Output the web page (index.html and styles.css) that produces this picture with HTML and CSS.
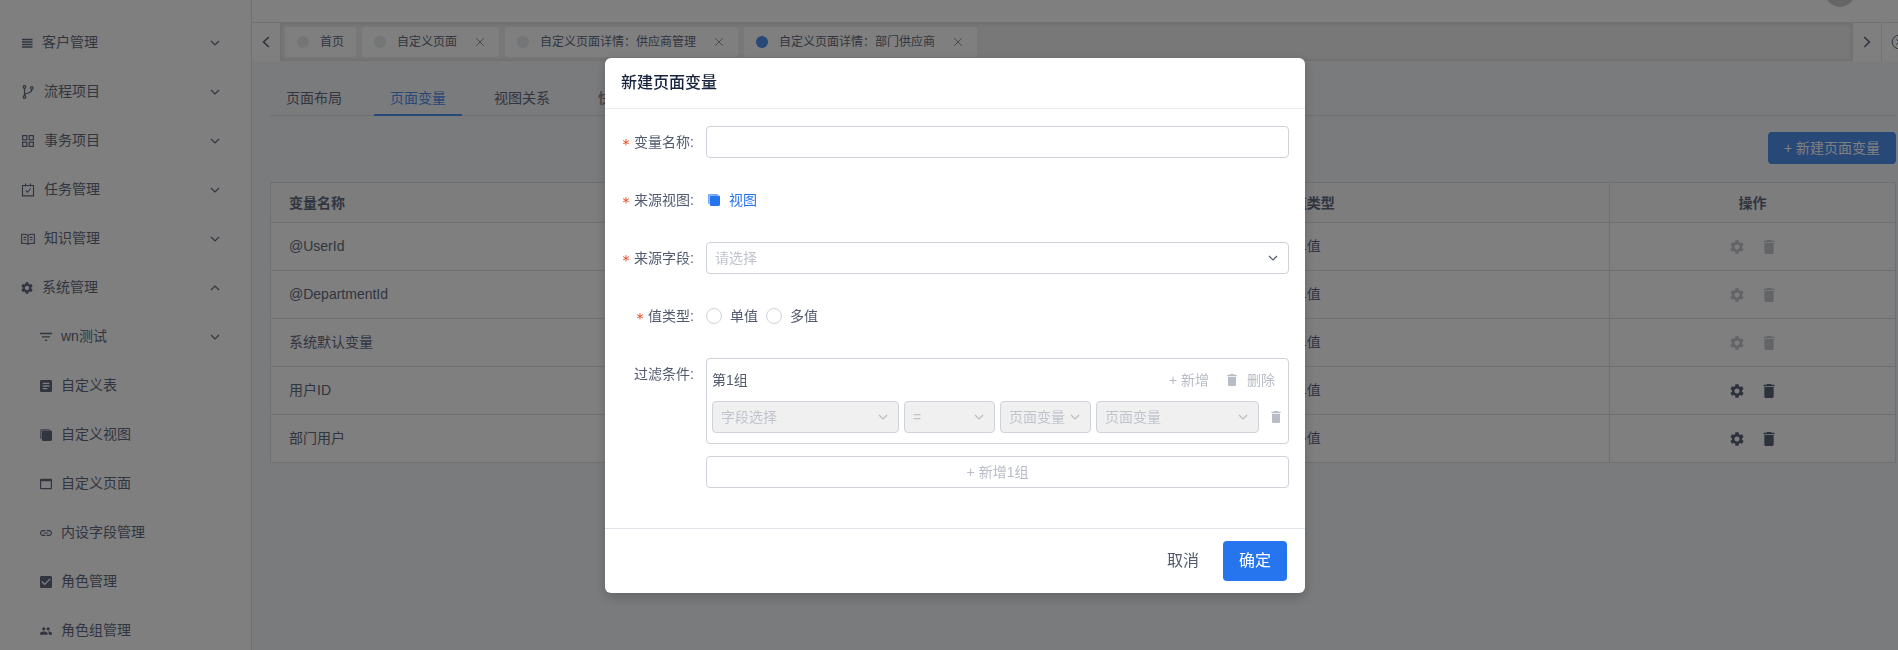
FILE: index.html
```html
<!DOCTYPE html>
<html lang="zh-CN">
<head>
<meta charset="utf-8">
<title>新建页面变量</title>
<link rel="stylesheet" href="styles.css">
</head>
<body>
<svg class="sprite" aria-hidden="true">
  <symbol id="i-menu" viewBox="0 0 12 12"><path d="M1 2.500h10.500M1 5h10.500M1 7.500h10.500M1 10h10.500" stroke="currentColor" stroke-width="1.300" fill="none"/></symbol>
  <symbol id="i-branch" viewBox="0 0 14 14"><g fill="none" stroke="currentColor" stroke-width="1.200"><circle cx="3.500" cy="2" r="1.300"/><circle cx="3.500" cy="12" r="1.300"/><circle cx="10.800" cy="3" r="1.300"/><path d="M3.500 3.300v7.400M10.800 4.300c0 3.400-1.800 3.200-4 3.700-2 .4-3.300 1-3.300 2.700"/></g></symbol>
  <symbol id="i-grid" viewBox="0 0 14 14"><g fill="none" stroke="currentColor" stroke-width="1.200"><rect x="1.600" y="1.600" width="4.200" height="4.200"/><rect x="8.200" y="1.600" width="4.200" height="4.200"/><rect x="1.600" y="8.200" width="4.200" height="4.200"/><rect x="8.200" y="8.200" width="4.200" height="4.200"/></g></symbol>
  <symbol id="i-task" viewBox="0 0 14 14"><path d="M1.500 2.500h11v10.400h-11zM4.500.6v3M9.500.6v3M4.600 7.300l1.900 2 3.200-3.800" fill="none" stroke="currentColor" stroke-width="1.100"/></symbol>
  <symbol id="i-book" viewBox="0 0 14 14"><path d="M7 3.200C5.500 2.200 3 2.200.6 2.400v9c2.400-.2 4.900-.2 6.400.9 1.500-1.100 4-1.100 6.400-.9v-9C11 2.200 8.500 2.200 7 3.200zv9M2.500 5.400h2.700M2.500 7.700h2.700M8.800 5.400h2.700M8.800 7.700h2.700" fill="none" stroke="currentColor" stroke-width="1.100"/></symbol>
  <symbol id="i-gear" viewBox="2 2 20 20"><path fill="currentColor" d="M19.140 12.940c.04-.3.06-.61.06-.94 0-.32-.02-.64-.07-.94l2.030-1.580c.18-.14.23-.41.12-.61l-1.920-3.320c-.12-.22-.37-.29-.59-.22l-2.390.96c-.5-.38-1.030-.7-1.620-.94l-.36-2.540c-.04-.24-.24-.41-.48-.41h-3.840c-.24 0-.43.17-.47.41l-.36 2.540c-.59.24-1.130.57-1.620.94l-2.390-.96c-.22-.08-.47 0-.59.22L2.740 8.870c-.12.21-.08.47.12.61l2.030 1.580c-.05.3-.09.63-.09.94s.02.64.07.94l-2.030 1.580c-.18.14-.23.41-.12.61l1.920 3.320c.12.22.37.29.59.22l2.390-.96c.5.38 1.030.7 1.620.94l.36 2.540c.05.24.24.41.48.41h3.840c.24 0 .44-.17.47-.41l.36-2.540c.59-.24 1.130-.56 1.620-.94l2.390.96c.22.08.47 0 .59-.22l1.920-3.320c.12-.22.07-.47-.12-.61l-2.010-1.580zM12 15.600c-1.980 0-3.600-1.620-3.600-3.600s1.620-3.600 3.600-3.600 3.600 1.620 3.600 3.600-1.620 3.600-3.600 3.600z"/></symbol>
  <symbol id="i-filter" viewBox="0 0 12 12"><path d="M0 2.500h12M2 5.900h8M4.800 9.300h2.400" stroke="currentColor" stroke-width="1.300" fill="none"/></symbol>
  <symbol id="i-doc" viewBox="3 3 18 18"><path fill="currentColor" d="M19 3H5c-1.100 0-2 .9-2 2v14c0 1.100.9 2 2 2h14c1.100 0 2-.9 2-2V5c0-1.100-.9-2-2-2zm-5 14H7v-2h7v2zm3-4H7v-2h10v2zm0-4H7V7h10v2z"/></symbol>
  <symbol id="i-view" viewBox="0 0 12 12"><path fill="currentColor" opacity=".65" d="M1.400 0h7.400c.7 0 1.200.5 1.200 1.300H2.800c-.9 0-1.300.5-1.300 1.300V10C.5 10 0 9.400 0 8.700V1.400C0 .6.6 0 1.400 0z"/><rect fill="currentColor" x="1.800" y="1.600" width="10.200" height="10.400" rx="1.400"/></symbol>
  <symbol id="i-page" viewBox="0 0 12 12"><path fill="currentColor" fill-rule="evenodd" d="M1.300.8h9.400c.8 0 1.300.5 1.300 1.200v8c0 .8-.5 1.300-1.300 1.300H1.300C.5 11.300 0 10.800 0 10V2C0 1.300.5.8 1.300.8zM1.200 3.300V10h9.600V3.300z"/></symbol>
  <symbol id="i-link" viewBox="2 2 20 20"><path fill="currentColor" d="M3.900 12c0-1.710 1.390-3.100 3.100-3.100h4V7H7c-2.760 0-5 2.240-5 5s2.240 5 5 5h4v-1.900H7c-1.710 0-3.100-1.390-3.100-3.100zM8 13h8v-2H8v2zm9-6h-4v1.900h4c1.710 0 3.100 1.390 3.100 3.100s-1.390 3.100-3.100 3.100h-4V17h4c2.760 0 5-2.240 5-5s-2.240-5-5-5z"/></symbol>
  <symbol id="i-check" viewBox="3 3 18 18"><path fill="currentColor" d="M19 3H5c-1.110 0-2 .9-2 2v14c0 1.100.89 2 2 2h14c1.110 0 2-.9 2-2V5c0-1.100-.89-2-2-2zm-9 14l-5-5 1.410-1.410L10 14.170l7.590-7.590L19 8l-9 9z"/></symbol>
  <symbol id="i-group" viewBox="1 1 22 22"><path fill="currentColor" d="M16 11c1.660 0 2.990-1.340 2.990-3S17.660 5 16 5s-3 1.340-3 3 1.340 3 3 3zm-8 0c1.660 0 2.990-1.340 2.990-3S9.660 5 8 5 5 6.340 5 8s1.340 3 3 3zm0 2c-2.330 0-7 1.170-7 3.500V19h14v-2.500c0-2.330-4.670-3.500-7-3.500zm8 0c-.29 0-.62.02-.97.05 1.160.84 1.970 1.970 1.970 3.450V19h6v-2.500c0-2.330-4.670-3.500-7-3.500z"/></symbol>
  <symbol id="i-trash" viewBox="3 3 18 18"><path fill="currentColor" d="M6 19c0 1.100.9 2 2 2h8c1.100 0 2-.9 2-2V7H6v12zM19 4h-3.500l-1-1h-5l-1 1H5v2h14V4z"/></symbol>
  <symbol id="i-down" viewBox="0 0 10 10"><path d="M1 3l4 4 4-4" stroke="currentColor" stroke-width="1.200" fill="none"/></symbol>
  <symbol id="i-up" viewBox="0 0 10 10"><path d="M1 7l4-4 4 4" stroke="currentColor" stroke-width="1.200" fill="none"/></symbol>
  <symbol id="i-left" viewBox="0 0 12 12"><path d="M8.800 1L3.600 6l5.200 5" stroke="currentColor" stroke-width="1.700" fill="none"/></symbol>
  <symbol id="i-right" viewBox="0 0 12 12"><path d="M3.200 1l5.200 5-5.200 5" stroke="currentColor" stroke-width="1.700" fill="none"/></symbol>
  <symbol id="i-close" viewBox="0 0 10 10"><path d="M1.200 1.200l7.600 7.600M8.800 1.200L1.200 8.800" stroke="currentColor" stroke-width="1" fill="none"/></symbol>
  <symbol id="i-close-circle" viewBox="0 0 16 16"><g fill="none" stroke="currentColor"><circle cx="8" cy="8" r="6.800"/><path d="M5.300 5.300l5.400 5.400M10.700 5.300l-5.400 5.400"/></g></symbol>
</svg>

<div class="app">
  <nav class="sidebar">
    <button class="menu-item"><svg class="icon-sm"><use href="#i-menu"/></svg><span class="menu-text">客户管理</span><svg class="arrow"><use href="#i-down"/></svg></button>
    <button class="menu-item"><svg class="icon-md"><use href="#i-branch"/></svg><span class="menu-text">流程项目</span><svg class="arrow"><use href="#i-down"/></svg></button>
    <button class="menu-item"><svg class="icon-md"><use href="#i-grid"/></svg><span class="menu-text">事务项目</span><svg class="arrow"><use href="#i-down"/></svg></button>
    <button class="menu-item"><svg class="icon-md"><use href="#i-task"/></svg><span class="menu-text">任务管理</span><svg class="arrow"><use href="#i-down"/></svg></button>
    <button class="menu-item"><svg class="icon-md"><use href="#i-book"/></svg><span class="menu-text">知识管理</span><svg class="arrow"><use href="#i-down"/></svg></button>
    <button class="menu-item"><svg class="icon-sm"><use href="#i-gear"/></svg><span class="menu-text">系统管理</span><svg class="arrow"><use href="#i-up"/></svg></button>
    <button class="menu-item sub"><svg class="icon-sm"><use href="#i-filter"/></svg><span class="menu-text">wn测试</span><svg class="arrow"><use href="#i-down"/></svg></button>
    <a class="menu-item sub" href="#"><svg class="icon-sm"><use href="#i-doc"/></svg><span class="menu-text">自定义表</span></a>
    <a class="menu-item sub" href="#"><svg class="icon-sm"><use href="#i-view"/></svg><span class="menu-text">自定义视图</span></a>
    <a class="menu-item sub" href="#"><svg class="icon-sm"><use href="#i-page"/></svg><span class="menu-text">自定义页面</span></a>
    <a class="menu-item sub" href="#"><svg class="icon-sm"><use href="#i-link"/></svg><span class="menu-text">内设字段管理</span></a>
    <a class="menu-item sub" href="#"><svg class="icon-sm"><use href="#i-check"/></svg><span class="menu-text">角色管理</span></a>
    <a class="menu-item sub" href="#"><svg class="icon-sm"><use href="#i-group"/></svg><span class="menu-text">角色组管理</span></a>
  </nav>

  <div class="main">
    <header class="topbar"><span class="avatar"></span></header>
    <div class="tagbar">
      <button class="tag-nav" aria-label="向左"><svg class="icon-sm"><use href="#i-left"/></svg></button>
      <div class="tags">
        <div class="tag"><span class="dot"></span><span>首页</span></div>
        <div class="tag"><span class="dot"></span><span>自定义页面</span><button class="tag-close" aria-label="关闭"><svg><use href="#i-close"/></svg></button></div>
        <div class="tag"><span class="dot"></span><span>自定义页面详情：供应商管理</span><button class="tag-close" aria-label="关闭"><svg><use href="#i-close"/></svg></button></div>
        <div class="tag"><span class="dot active"></span><span>自定义页面详情：部门供应商</span><button class="tag-close" aria-label="关闭"><svg><use href="#i-close"/></svg></button></div>
      </div>
      <button class="tag-nav" aria-label="向右"><svg class="icon-sm"><use href="#i-right"/></svg></button>
      <button class="tag-all" aria-label="关闭全部"><svg><use href="#i-close-circle"/></svg></button>
    </div>

    <div class="content">
      <div class="page-tabs">
        <button class="page-tab">页面布局</button>
        <button class="page-tab current">页面变量</button>
        <button class="page-tab">视图关系</button>
        <button class="page-tab">快</button>
      </div>
      <div class="toolbar"><button class="btn-add">+ 新建页面变量</button></div>
      <table class="vars">
        <colgroup><col><col><col><col><col class="col-ops"></colgroup>
        <thead><tr><th>变量名称</th><th></th><th></th><th>值类型</th><th class="ops">操作</th></tr></thead>
        <tbody>
          <tr><td>@UserId</td><td></td><td></td><td>单值</td><td><div class="row-ops"><button class="op" disabled aria-label="设置"><svg><use href="#i-gear"/></svg></button><button class="op" disabled aria-label="删除"><svg><use href="#i-trash"/></svg></button></div></td></tr>
          <tr><td>@DepartmentId</td><td></td><td></td><td>单值</td><td><div class="row-ops"><button class="op" disabled aria-label="设置"><svg><use href="#i-gear"/></svg></button><button class="op" disabled aria-label="删除"><svg><use href="#i-trash"/></svg></button></div></td></tr>
          <tr><td>系统默认变量</td><td></td><td></td><td>单值</td><td><div class="row-ops"><button class="op" disabled aria-label="设置"><svg><use href="#i-gear"/></svg></button><button class="op" disabled aria-label="删除"><svg><use href="#i-trash"/></svg></button></div></td></tr>
          <tr><td>用户ID</td><td></td><td></td><td>单值</td><td><div class="row-ops"><button class="op" aria-label="设置"><svg><use href="#i-gear"/></svg></button><button class="op" aria-label="删除"><svg><use href="#i-trash"/></svg></button></div></td></tr>
          <tr><td>部门用户</td><td></td><td></td><td>多值</td><td><div class="row-ops"><button class="op" aria-label="设置"><svg><use href="#i-gear"/></svg></button><button class="op" aria-label="删除"><svg><use href="#i-trash"/></svg></button></div></td></tr>
        </tbody>
      </table>
    </div>
  </div>
</div>

<div class="mask">
  <form class="modal" role="dialog" aria-labelledby="modal-title">
    <h2 class="modal-head" id="modal-title">新建页面变量</h2>
    <div class="modal-body">
      <div class="row">
        <label class="label required" for="var-name">变量名称:</label>
        <input class="input" id="var-name" type="text">
      </div>
      <div class="row">
        <span class="label required">来源视图:</span>
        <a class="view-link" href="#"><svg class="icon-sm"><use href="#i-view"/></svg>视图</a>
      </div>
      <div class="row">
        <label class="label required" for="src-field">来源字段:</label>
        <div class="select"><select id="src-field"><option>请选择</option></select><svg><use href="#i-down"/></svg></div>
      </div>
      <div class="row">
        <span class="label required">值类型:</span>
        <div class="radios">
          <label class="radio"><input type="radio" name="kind">单值</label>
          <label class="radio"><input type="radio" name="kind">多值</label>
        </div>
      </div>
      <div class="row">
        <span class="label">过滤条件:</span>
        <div class="filters">
          <div class="group">
            <div class="group-head">
              <span class="group-title">第1组</span>
              <button class="text-btn" type="button" disabled>+ 新增</button>
              <button class="text-btn" type="button" disabled><svg><use href="#i-trash"/></svg>删除</button>
            </div>
            <div class="group-row">
              <div class="select"><select disabled aria-label="字段"><option>字段选择</option></select><svg><use href="#i-down"/></svg></div>
              <div class="select"><select disabled aria-label="运算符"><option>=</option></select><svg><use href="#i-down"/></svg></div>
              <div class="select"><select disabled aria-label="类型"><option>页面变量</option></select><svg><use href="#i-down"/></svg></div>
              <div class="select"><select disabled aria-label="值"><option>页面变量</option></select><svg><use href="#i-down"/></svg></div>
              <button class="text-btn remove" type="button" disabled aria-label="删除"><svg><use href="#i-trash"/></svg></button>
            </div>
          </div>
          <button class="add-group" type="button" disabled>+ 新增1组</button>
        </div>
      </div>
    </div>
    <div class="modal-foot">
      <button class="btn cancel" type="button">取消</button>
      <button class="btn confirm" type="button">确定</button>
    </div>
  </form>
</div>
</body>
</html>
```

FILE: styles.css
```css
* { box-sizing: border-box; }

body {
  margin: 0;
  height: 100vh;
  overflow: hidden;
  font: 14px/20px "Liberation Sans", "Noto Sans CJK SC", sans-serif;
  color: #515a6e;
}

button, input, select { font: inherit; color: inherit; }
button { padding: 0; border: 0; background: none; }
a { color: inherit; text-decoration: none; }
svg { display: block; flex: none; }

.sprite { display: none; }
.icon-sm { width: 12px; height: 12px; }
.icon-md { width: 14px; height: 14px; }

.app { display: flex; height: 100vh; overflow: hidden; color: #646b80; }

/* sidebar */
.sidebar {
  flex: none;
  width: 252px;
  padding-top: 18px;
  border-right: 1px solid #dcdee2;
  background: #fff;
}
.menu-item {
  display: flex;
  align-items: center;
  gap: 9px;
  width: 100%;
  height: 49px;
  padding: 0 31px 0 21px;
  text-align: left;
}
.menu-item.sub { padding-left: 40px; }
.menu-text { flex: 1; padding-bottom: 2px; }
.arrow { width: 10px; height: 10px; }

/* top area */
.main {
  flex: 1;
  min-width: 0;
  background: #f4f6f9;
}
.topbar {
  display: flex;
  justify-content: flex-end;
  align-items: flex-end;
  height: 23px;
  padding: 0 43px 15px 0;
  border-bottom: 1px solid #e4e4e4;
  background: #fff;
}
.avatar {
  width: 30px;
  height: 30px;
  border-radius: 50%;
  background: #ccc;
}
.tagbar {
  display: flex;
  height: 38px;
  background: #fff;
}
.tag-nav {
  display: flex;
  align-items: center;
  justify-content: center;
  flex: none;
  width: 28px;
}
.tag-all {
  flex: none;
  width: 17px;
  padding-left: 9px;
  border-left: 1px solid #e8e8e8;
  overflow: hidden;
}
.tag-all svg { width: 16px; height: 16px; }
.tags {
  flex: 1;
  display: flex;
  align-items: center;
  gap: 6px;
  padding: 0 5px;
  background: #f0f0f0;
  box-shadow: inset 0 0 3px 2px rgba(100, 100, 100, .1);
}
.tag {
  display: flex;
  align-items: center;
  gap: 11px;
  height: 30px;
  padding: 0 12px;
  border-radius: 3px;
  background: #fff;
  font-size: 12px;
}
.dot {
  width: 12px;
  height: 12px;
  border-radius: 50%;
  background: #e8eaec;
}
.dot.active { background: #5090f0; }
.tag-close { padding: 0 2px 0 7px; color: #999; }
.tag-close svg { width: 10px; height: 10px; }

/* page content */
.content { padding: 16px 2px 0 18px; }
.page-tabs {
  display: flex;
  gap: 16px;
  height: 39px;
  border-bottom: 1px solid #dcdee2;
}
.page-tab {
  height: 39px;
  padding: 4px 16px 0;
  border-bottom: 2px solid transparent;
}
.page-tab.current { border-color: #5090f0; color: #5090f0; }
.toolbar {
  display: flex;
  justify-content: flex-end;
  padding: 16px 0 18px;
}
.btn-add {
  height: 32px;
  padding: 0 16px;
  border-radius: 4px;
  background: #5090f0;
  color: #fff;
}
.vars {
  width: 100%;
  table-layout: fixed;
  border-collapse: collapse;
  background: #fff;
  border: 1px solid #dcdee2;
}
.col-ops { width: 286px; }
.vars th, .vars td {
  border-bottom: 1px solid #dfe1e5;
  text-align: left;
}
.vars th:last-child, .vars td:last-child { border-left: 1px solid #dfe1e5; }
.vars th { height: 40px; padding: 0 18px; background: #fafafa; font-weight: 700; }
.vars td { height: 48px; padding: 0 18px 2px; }
.vars .ops { text-align: center; }
.row-ops { display: flex; justify-content: center; gap: 18px; padding-top: 2px; }
.op { color: #5c6479; }
.op svg { width: 14px; height: 14px; }
.op:disabled { color: #c5c8ce; }

/* dialog */
.mask {
  position: fixed;
  inset: 0;
  display: flex;
  justify-content: center;
  align-items: flex-start;
  padding: 58px 0 0 12px;
  background: rgba(0, 0, 0, .5);
}
.modal {
  width: 700px;
  max-width: 100%;
  border-radius: 6px;
  background: #fff;
  box-shadow: 0 4px 12px rgba(0, 0, 0, .2);
}
.modal-head {
  margin: 0;
  padding: 13px 16px;
  border-bottom: 1px solid #e8eaec;
  font-size: 16px;
  line-height: 24px;
  font-weight: 500;
  color: #17233d;
}
.modal-body {
  display: grid;
  gap: 26px;
  padding: 17px 16px 40px;
}
.row {
  display: grid;
  grid-template-columns: 73px 1fr;
  gap: 12px;
}
.label {
  display: flex;
  align-items: center;
  justify-content: flex-end;
  gap: 4px;
  height: 32px;
  white-space: nowrap;
}
.required::before {
  content: "*";
  padding-top: 4px;
  font-family: "DejaVu Sans Mono", monospace;
  color: #ed4014;
}
.input, .select select {
  display: block;
  width: 100%;
  height: 32px;
  padding: 0 8px;
  border: 1px solid #d0d2da;
  border-radius: 4px;
  background: #fff;
}
.select { position: relative; }
.select select { appearance: none; color: #c0c4cc; opacity: 1; }
.select select:disabled { background: #f0f0f0; }
.select svg {
  position: absolute;
  right: 11px;
  top: 11px;
  width: 10px;
  height: 10px;
  pointer-events: none;
}
.select select:disabled + svg { color: #b8bcc6; }
.view-link {
  display: flex;
  align-items: center;
  gap: 9px;
  padding-left: 2px;
  color: #2775ee;
}
.radios { display: flex; gap: 8px; }
.radio { display: flex; align-items: center; gap: 8px; }
.radio input {
  appearance: none;
  width: 16px;
  height: 16px;
  margin: 0;
  border: 1px solid #d0d2da;
  border-radius: 50%;
}
.filters { display: grid; gap: 12px; }
.group {
  padding: 0 0 10px 5px;
  border: 1px solid #d0d2da;
  border-radius: 4px;
}
.group-head {
  display: flex;
  align-items: center;
  gap: 17px;
  height: 42px;
  padding-right: 13px;
}
.group-title { flex: 1; }
.text-btn {
  display: flex;
  align-items: center;
  gap: 9px;
  color: #b8bcc6;
}
.text-btn svg { width: 12px; height: 12px; }
.group-row {
  display: grid;
  grid-template-columns: 187fr 91fr 91fr 163fr 24px;
  gap: 5px;
}
.remove { justify-content: center; }
.add-group {
  height: 32px;
  border: 1px solid #d0d2da;
  border-radius: 4px;
  color: #b8bcc6;
}
.modal-foot {
  display: flex;
  justify-content: flex-end;
  gap: 8px;
  padding: 12px 18px;
  border-top: 1px solid #dfe3ea;
}
.btn {
  height: 40px;
  padding: 0 16px;
  border-radius: 4px;
  font-size: 16px;
}
.confirm { background: #2775ee; color: #fff; }
```
